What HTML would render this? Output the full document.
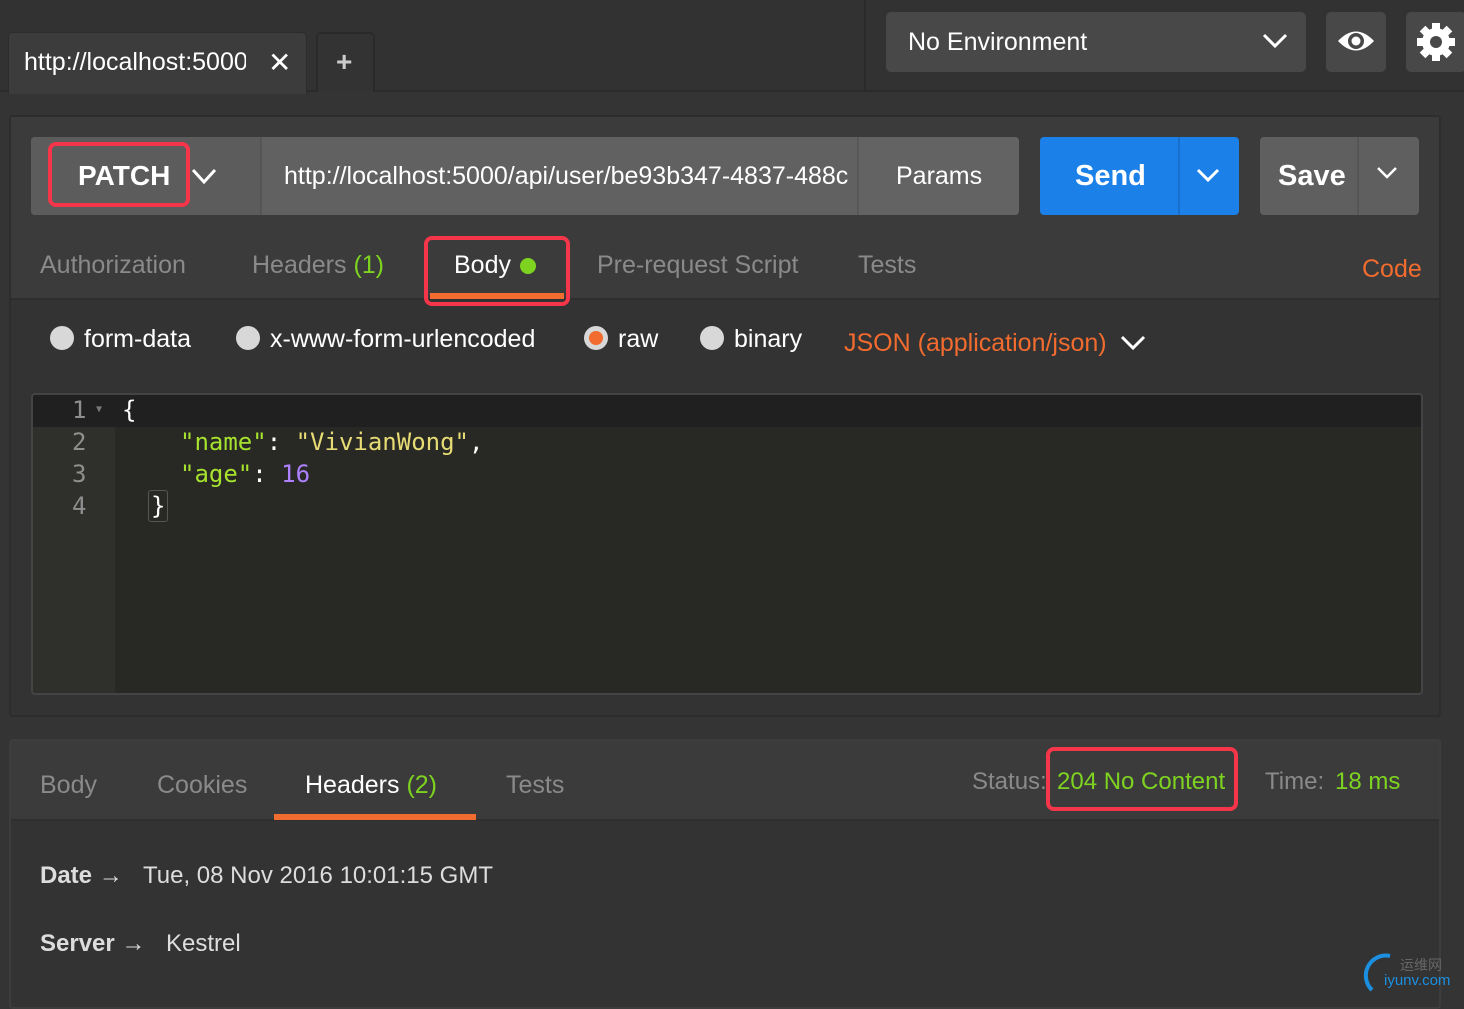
<!DOCTYPE html>
<html><head><meta charset="utf-8"><style>
*{margin:0;padding:0;box-sizing:border-box}
body{width:1464px;height:998px;background:#343434;font-family:"Liberation Sans","Noto Sans CJK SC",sans-serif;position:relative;overflow:hidden;color:#fff}
.a{position:absolute;white-space:nowrap}
.red{position:absolute;border:4px solid #f5364a;border-radius:8px}
</style></head><body>
<!-- top bar -->
<div class="a" style="left:0;top:0;width:1464px;height:92px;background:#323232;border-bottom:2px solid #2a2a2a"></div>
<div class="a" style="left:864px;top:0;width:2px;height:92px;background:#2a2a2a"></div>
<div class="a" style="left:8px;top:32px;width:299px;height:62px;background:#3c3c3c;border:1px solid #2c2c2c;border-bottom:none;border-radius:5px 5px 0 0"></div>
<div class="a" style="left:24px;top:48px;font-size:25px;color:#fff;width:222px;overflow:hidden">http://localhost:5000</div>
<div class="a" style="left:268px;top:46px;font-size:28px;color:#fff">✕</div>
<div class="a" style="left:316px;top:32px;width:59px;height:60px;background:#333;border:2px solid #2a2a2a;border-bottom:none;border-radius:5px 5px 0 0"></div>
<div class="a" style="left:336px;top:46px;font-size:28px;color:#ccc;font-weight:bold">+</div>
<div class="a" style="left:886px;top:12px;width:420px;height:60px;background:#484848;border-radius:5px"></div>
<div class="a" style="left:908px;top:28px;font-size:25px;color:#fff">No Environment</div>
<svg class="a" style="left:1262px;top:32px" width="26" height="18"><path d="M2 3L13 14L24 3" stroke="#fff" stroke-width="3" fill="none"/></svg>
<div class="a" style="left:1326px;top:12px;width:60px;height:60px;background:#484848;border-radius:5px"></div>
<svg class="a" style="left:1336px;top:26px" width="40" height="30"><path d="M2 15Q20 -4 38 15Q20 34 2 15Z" fill="#fff"/><circle cx="20" cy="15" r="8" fill="#484848"/><circle cx="20" cy="15" r="4.5" fill="#fff"/></svg>
<div class="a" style="left:1406px;top:12px;width:60px;height:60px;background:#484848;border-radius:5px"></div>
<svg class="a" style="left:1416px;top:22px" width="40" height="40" viewBox="0 0 40 40"><g fill="#fff" transform="translate(20 20)"><rect x="-4" y="-19" width="8" height="38"/><rect x="-4" y="-19" width="8" height="38" transform="rotate(45)"/><rect x="-4" y="-19" width="8" height="38" transform="rotate(90)"/><rect x="-4" y="-19" width="8" height="38" transform="rotate(135)"/><circle r="14"/></g><circle cx="20" cy="20" r="6" fill="#484848"/></svg>

<!-- request panel -->
<div class="a" style="left:9px;top:115px;width:1432px;height:602px;background:#333;border:2px solid #2d2d2d;border-radius:4px"></div>
<div class="a" style="left:11px;top:117px;width:1428px;height:183px;background:#3b3b3b;border-bottom:2px solid #2e2e2e"></div>
<div class="a" style="left:31px;top:137px;width:988px;height:78px;background:#616161;border-radius:4px"></div>
<div class="a" style="left:31px;top:137px;width:231px;height:78px;background:#5c5c5c;border-radius:4px 0 0 4px;border-right:2px solid #555"></div>
<div class="a" style="left:857px;top:137px;width:162px;height:78px;background:#636363;border-left:2px solid #585858;border-radius:0 4px 4px 0"></div>
<div class="a" style="left:78px;top:160px;font-size:28px;font-weight:bold;color:#fff">PATCH</div>
<div class="red" style="left:48px;top:142px;width:142px;height:65px"></div>
<svg class="a" style="left:190px;top:167px" width="28" height="20"><path d="M3 3L14 15L25 3" stroke="#fff" stroke-width="3" fill="none"/></svg>
<div class="a" style="left:284px;top:162px;font-size:25px;color:#fff;width:572px;overflow:hidden">http://localhost:5000/api/user/be93b347-4837-488c</div>
<div class="a" style="left:896px;top:162px;font-size:25px;color:#fff">Params</div>
<div class="a" style="left:1040px;top:137px;width:199px;height:78px;background:#1b80e8;border-radius:4px"></div>
<div class="a" style="left:1178px;top:137px;width:2px;height:78px;background:#1870cc"></div>
<div class="a" style="left:1075px;top:160px;font-size:29px;font-weight:bold;color:#fff">Send</div>
<svg class="a" style="left:1196px;top:167px" width="24" height="18"><path d="M2 3L12 13L22 3" stroke="#fff" stroke-width="3" fill="none"/></svg>
<div class="a" style="left:1260px;top:137px;width:159px;height:78px;background:#5f5f5f;border-radius:4px"></div>
<div class="a" style="left:1357px;top:137px;width:2px;height:78px;background:#555"></div>
<div class="a" style="left:1278px;top:160px;font-size:29px;font-weight:bold;color:#fff">Save</div>
<svg class="a" style="left:1376px;top:166px" width="22" height="16"><path d="M2 2L11 11L20 2" stroke="#fff" stroke-width="2.5" fill="none"/></svg>

<div class="a" style="left:40px;top:251px;font-size:25px;color:#8a8a8a">Authorization</div>
<div class="a" style="left:252px;top:251px;font-size:25px;color:#8a8a8a">Headers <span style="color:#7ed321">(1)</span></div>
<div class="a" style="left:454px;top:251px;font-size:25px;color:#fff">Body</div>
<div class="a" style="left:520px;top:258px;width:16px;height:16px;border-radius:50%;background:#7ed321"></div>
<div class="a" style="left:430px;top:293px;width:134px;height:6px;background:#f26b2f"></div>
<div class="red" style="left:424px;top:236px;width:146px;height:70px"></div>
<div class="a" style="left:597px;top:251px;font-size:25px;color:#8a8a8a">Pre-request Script</div>
<div class="a" style="left:858px;top:251px;font-size:25px;color:#8a8a8a">Tests</div>
<div class="a" style="left:1362px;top:255px;font-size:25px;color:#f26b2f">Code</div>

<div class="a" style="left:50px;top:326px;width:24px;height:24px;border-radius:50%;background:#d8d8d8"></div>
<div class="a" style="left:84px;top:325px;font-size:25px;color:#fff">form-data</div>
<div class="a" style="left:236px;top:326px;width:24px;height:24px;border-radius:50%;background:#d8d8d8"></div>
<div class="a" style="left:270px;top:325px;font-size:25px;color:#fff">x-www-form-urlencoded</div>
<div class="a" style="left:584px;top:326px;width:24px;height:24px;border-radius:50%;background:#d8d8d8"></div>
<div class="a" style="left:589px;top:331px;width:14px;height:14px;border-radius:50%;background:#f26b2f"></div>
<div class="a" style="left:618px;top:325px;font-size:25px;color:#fff">raw</div>
<div class="a" style="left:700px;top:326px;width:24px;height:24px;border-radius:50%;background:#d8d8d8"></div>
<div class="a" style="left:734px;top:325px;font-size:25px;color:#fff">binary</div>
<div class="a" style="left:844px;top:329px;font-size:25px;color:#f26b2f">JSON (application/json)</div>
<svg class="a" style="left:1120px;top:334px" width="26" height="18"><path d="M2 3L13 14L24 3" stroke="#fff" stroke-width="3" fill="none"/></svg>

<!-- editor -->
<div class="a" style="left:31px;top:393px;width:1392px;height:302px;background:#282824;border:2px solid #444;border-radius:4px;overflow:hidden">
 <div class="a" style="left:0;top:0;width:82px;height:300px;background:#2f2f2b"></div>
 <div class="a" style="left:0;top:0;width:1392px;height:32px;background:#202020"></div>
</div>
<div class="a" style="font-family:'DejaVu Sans Mono','Liberation Mono',monospace;font-size:24px;left:0;top:394px;line-height:32px">
 <div class="a" style="left:72px;top:0;color:#8f8f8f">1</div><div class="a" style="left:96px;top:0;font-size:10px;color:#777">▼</div>
 <div class="a" style="left:72px;top:32px;color:#8f8f8f">2</div>
 <div class="a" style="left:72px;top:64px;color:#8f8f8f">3</div>
 <div class="a" style="left:72px;top:96px;color:#8f8f8f">4</div>
 <div class="a" style="left:122px;top:0;color:#fff">{</div>
 <div class="a" style="left:180px;top:32px;color:#fff"><span style="color:#a6e22e">"name"</span>: <span style="color:#e6db74">"VivianWong"</span>,</div>
 <div class="a" style="left:180px;top:64px;color:#fff"><span style="color:#a6e22e">"age"</span>: <span style="color:#ae81ff">16</span></div>
 <div class="a" style="left:148px;top:96px;color:#fff;border:1px solid #555;border-radius:3px;padding:0 2px;line-height:30px">}</div>
</div>

<!-- response panel -->
<div class="a" style="left:9px;top:739px;width:1432px;height:270px;background:#333;border:2px solid #3d3d3d;border-radius:4px"></div>
<div class="a" style="left:11px;top:741px;width:1428px;height:80px;background:#3b3b3b;border-bottom:2px solid #2f2f2f"></div>
<div class="a" style="left:40px;top:771px;font-size:25px;color:#8a8a8a">Body</div>
<div class="a" style="left:157px;top:771px;font-size:25px;color:#8a8a8a">Cookies</div>
<div class="a" style="left:305px;top:771px;font-size:25px;color:#fff">Headers <span style="color:#7ed321">(2)</span></div>
<div class="a" style="left:506px;top:771px;font-size:25px;color:#8a8a8a">Tests</div>
<div class="a" style="left:274px;top:814px;width:202px;height:6px;background:#f26b2f"></div>
<div class="a" style="left:972px;top:768px;font-size:24px;color:#8a8a8a">Status:</div>
<div class="a" style="left:1057px;top:768px;font-size:24px;color:#7ed321">204 No Content</div>
<div class="red" style="left:1046px;top:747px;width:192px;height:64px"></div>
<div class="a" style="left:1265px;top:768px;font-size:24px;color:#8a8a8a">Time:</div>
<div class="a" style="left:1335px;top:768px;font-size:24px;color:#7ed321">18 ms</div>

<div class="a" style="left:40px;top:862px;font-size:24px;color:#ddd"><b>Date</b> →</div>
<div class="a" style="left:143px;top:862px;font-size:24px;color:#ddd">Tue, 08 Nov 2016 10:01:15 GMT</div>
<div class="a" style="left:40px;top:930px;font-size:24px;color:#ddd"><b>Server</b> →</div>
<div class="a" style="left:166px;top:930px;font-size:24px;color:#ddd">Kestrel</div>

<svg class="a" style="left:1360px;top:950px" width="40" height="44"><path d="M30 6A20 20 0 0 0 12 40" stroke="#1b8fe0" stroke-width="4" fill="none"/></svg>
<div class="a" style="left:1400px;top:955px;font-size:14px;color:#666">运维网</div>
<div class="a" style="left:1384px;top:972px;font-size:15px;color:#1b8fe0">iyunv.com</div>
</body></html>
